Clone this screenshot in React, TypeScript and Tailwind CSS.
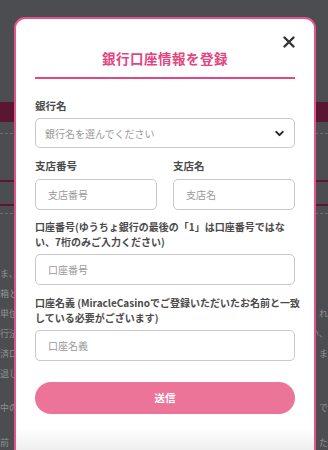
import { ChevronDown } from 'lucide-react'

const rows: [string, string][] = [
  ['ま、', ''],
  ['箱と', ''],
  ['単位', 'れ'],
  ['行法', 'い、'],
  ['済口', 'ま'],
  ['退し', ''],
]

function Label({ children }: { children: React.ReactNode }) {
  return <p className="text-[10.5px] font-bold leading-[16px] text-[#4a4a4a]">{children}</p>
}

function Field({ placeholder }: { placeholder: string }) {
  return (
    <div className="flex h-[31px] items-center rounded-[5px] border border-[#c9c9c9] bg-white px-[12px] text-[10px] text-[#9a9a9a]">
      {placeholder}
    </div>
  )
}

export default function App() {
  return (
    <div
      className="relative h-[450px] w-[328px] overflow-hidden bg-[#4b4d50]"
      style={{ fontFamily: '"Noto Sans CJK JP", "Noto Sans", sans-serif' }}
    >
      {/* 背景ページ */}
      <div className="flex flex-col">
        <div className="h-[102px]" />
        <div className="h-[20px] bg-[#5b1732]" />
        <div className="h-[11px]" />
        <div className="border-t border-dashed border-[#6d6f72]" />
        <div className="h-[46px]" />
        <div className="h-[2px] bg-[#5b1732]" />
        <div className="h-[22px]" />
        <div className="h-[2px] bg-[#5b1732]" />
        <div className="h-[7px]" />
        <div className="border-t border-dashed border-[#6d6f72]" />
        <div className="h-[50px]" />
        {rows.map(([l, r], i) => (
          <div key={i} className="flex h-[20px] items-center justify-between text-[9px] text-[#8e8f91]">
            <span>{l}</span>
            <span>{r}</span>
          </div>
        ))}
        <div className="h-[14px]" />
        <div className="flex h-[20px] items-center justify-between text-[9px] text-[#8e8f91]">
          <span>中の</span>
          <span>で</span>
        </div>
        <div className="h-[15px]" />
        <div className="flex h-[20px] items-center justify-between text-[9px] text-[#8e8f91]">
          <span>前</span>
          <span>た</span>
        </div>
      </div>

      {/* モーダル */}
      <div className="absolute left-[14px] top-[17px] w-[302px] overflow-hidden rounded-[11px] border-2 border-[#e6528b] bg-white">
        <button className="absolute right-[19px] top-[17px] text-[#333]">
          <svg width="12" height="12" viewBox="0 0 12 12" fill="none" stroke="currentColor" strokeWidth="2.4" strokeLinecap="round">
            <path d="M1.5 1.5l9 9M10.5 1.5l-9 9" />
          </svg>
        </button>

        <div className="flex flex-col px-[19px] pt-[28px]">
          <h2 className="text-center text-[13.5px] font-bold leading-[22px] tracking-[0.5px] text-[#e3437e]">
            銀行口座情報を登録
          </h2>
          <div className="mt-[8px] h-[2px] bg-[#e3477f]" />

          <div className="mt-[19px]">
            <Label>銀行名</Label>
          </div>
          <div className="mt-[4px] flex h-[30px] items-center justify-between rounded-[5px] border border-[#c9c9c9] bg-white pl-[9px] pr-[8px] text-[10px] text-[#9a9a9a]">
            <span>銀行名を選んでください</span>
            <ChevronDown size={13} strokeWidth={3.5} className="text-[#222]" />
          </div>

          <div className="mt-[10px] grid grid-cols-2 gap-x-[16px]">
            <div className="flex flex-col gap-[5px]">
              <Label>支店番号</Label>
              <Field placeholder="支店番号" />
            </div>
            <div className="flex flex-col gap-[5px]">
              <Label>支店名</Label>
              <Field placeholder="支店名" />
            </div>
          </div>

          <div className="mt-[9px] text-[10px] font-bold leading-[15px] text-[#4a4a4a]">
            <p className="whitespace-nowrap">口座番号(ゆうちょ銀行の最後の「1」は口座番号ではな</p>
            <p className="whitespace-nowrap">い、7桁のみご入力ください)</p>
          </div>
          <div className="mt-[5px]">
            <Field placeholder="口座番号" />
          </div>

          <div className="mt-[10px] text-[10px] font-bold leading-[15px] text-[#4a4a4a]">
            <p className="whitespace-nowrap">口座名義 (MiracleCasinoでご登録いただいたお名前と一致</p>
            <p className="whitespace-nowrap">している必要がございます)</p>
          </div>
          <div className="mt-[5px]">
            <Field placeholder="口座名義" />
          </div>

          <button className="mt-[21px] flex h-[32px] items-center justify-center rounded-full bg-[#ec7499] text-[10.5px] font-bold text-white">
            送信
          </button>
        </div>
        <div className="mt-[14px] h-[30px] bg-gradient-to-b from-white to-[#e9e9e9]" />
      </div>
    </div>
  )
}
